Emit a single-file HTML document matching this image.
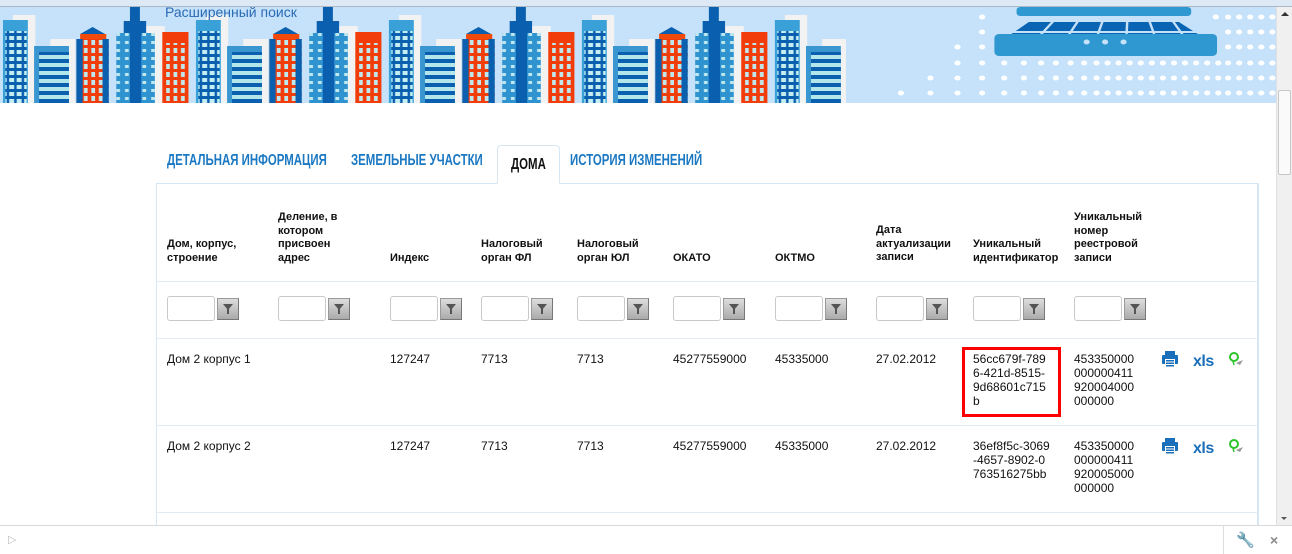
<!DOCTYPE html>
<html><head><meta charset="utf-8"><style>
*{margin:0;padding:0;box-sizing:border-box}
body{width:1292px;height:554px;overflow:hidden;background:#fff;font-family:"Liberation Sans",sans-serif;position:relative}
.a{position:absolute}
.top{left:0;top:0;width:1292px;height:7px;background:#dde9f5;border-bottom:1px solid #aab8c8}
.banner{left:0;top:7px;width:1276px;height:96px;background:#c5e2fa;overflow:hidden}
.sb{left:1276px;top:7px;width:16px;height:518px;background:#f0f0f0;border-left:1px solid #e0e0e0}
.thumb{left:1278px;top:90px;width:13px;height:85px;background:#fafafa;border:1px solid #c8c8c8;border-radius:2px}
.bot{left:0;top:525px;width:1292px;height:29px;background:#fff;border-top:1px solid #d8d8d8}
.tab{top:145px;height:38px;font-weight:bold;font-size:16px;color:#1b78c2;line-height:32px;white-space:nowrap}
.tab span{display:inline-block;transform:scaleX(0.715);transform-origin:left center}
.tab.act{border:1px solid #d6e6f2;border-bottom:1px solid #fff;background:#fff;color:#111;border-radius:4px 4px 0 0;height:39px;line-height:38px;padding-left:13px}
.box{left:156px;top:183px;width:1103px;height:360px;border:1px solid #d6e6f2;border-right:2px solid #d6e6f2}
.h{font-size:11px;font-weight:bold;color:#111;line-height:13.5px}
.c{font-size:12px;color:#111;line-height:14px}
.sep{left:157px;width:1101px;height:1px;background:#e3ecf4}
.inp{top:296px;width:48px;height:25px;border:1px solid #c9c9c9;border-radius:3px;background:#fff}
.fb{top:298px;width:22px;height:22px;background:linear-gradient(#ddd,#aaa);border:1px solid #999;border-right-color:#777;border-bottom-color:#777}
.fb:after{content:"";position:absolute;left:5px;top:5px;border-left:5px solid transparent;border-right:5px solid transparent;border-top:6px solid #555}
.fb:before{content:"";position:absolute;left:9px;top:10px;width:2px;height:5px;background:#555}
</style></head><body>
<div class="a top"></div>
<div class="a banner">
<svg width="1276" height="96" viewBox="0 0 1276 96">
<defs>
<pattern id="w1" width="6" height="7" patternUnits="userSpaceOnUse"><rect width="6" height="7" fill="#0a5fae"/><rect x="1" y="1" width="4" height="4" fill="#c5eef2"/></pattern>
<pattern id="w2" width="6" height="8" patternUnits="userSpaceOnUse"><rect width="6" height="8" fill="#f23d0a"/><rect x="1" y="1" width="3" height="5" fill="#bfe8ee"/></pattern>
<pattern id="w3" width="7" height="8" patternUnits="userSpaceOnUse"><rect width="7" height="8" fill="#2f93d0"/><rect x="1" y="2" width="3" height="3" fill="#bfe8ee"/></pattern>
<pattern id="st" width="10" height="8" patternUnits="userSpaceOnUse"><rect width="10" height="8" fill="#0a5fae"/><rect y="0" width="10" height="4" fill="#b2e6ea"/></pattern>
<clipPath id="cl"><rect x="0" y="0" width="846" height="96"/></clipPath>
<g id="u">
<rect x="16" y="8" width="18" height="90" fill="#f2f2f2"/>
<rect x="46" y="32" width="20" height="70" fill="#f2f2f2"/>
<rect x="122" y="19" width="16" height="80" fill="#f2f2f2"/>
<rect x="8" y="13" width="20" height="90" fill="#3aa0d8"/><rect x="10" y="24" width="17" height="79" fill="url(#w1)"/>
<rect x="33" y="39" width="28" height="64" fill="#3a96d0"/><rect x="37" y="45" width="24" height="58" fill="url(#st)"/>
<polygon points="70,27 80,20 90,27" fill="#0a5fae"/><rect x="70" y="27" width="21" height="76" fill="#f24a0a"/><rect x="67" y="32" width="26" height="71" fill="url(#w2)"/><rect x="67" y="32" width="5" height="71" fill="#0a5fae"/><rect x="88" y="32" width="5" height="71" fill="#0a5fae"/>
<rect x="110" y="0" width="8" height="20" fill="#0a5fae"/><rect x="105" y="14" width="18" height="89" fill="#0a5fae"/>
<rect x="99" y="26" width="11" height="77" fill="url(#w3)"/><rect x="119" y="26" width="11" height="77" fill="url(#w3)"/>
<rect x="136" y="25" width="21" height="78" fill="#f23d0a"/><rect x="139" y="36" width="16" height="67" fill="url(#w2)"/>
</g>
</defs>
<g clip-path="url(#cl)"><g transform="translate(-7,0) scale(1.245,1)">
<use href="#u" x="-155"/><use href="#u" x="0"/><use href="#u" x="155"/><use href="#u" x="310"/><use href="#u" x="465"/><use href="#u" x="620"/>
</g></g>
<g transform="translate(650,0) scale(1.23,1) translate(-650,0)">
<g fill="#fff"><circle cx="854" cy="86" r="2.5"/><circle cx="878" cy="86" r="2.5"/><circle cx="878" cy="71" r="2.5"/>
<circle cx="900" cy="40" r="2.5"/><circle cx="900" cy="56" r="2.5"/><circle cx="900" cy="71" r="2.5"/><circle cx="900" cy="86" r="2.5"/>
<circle cx="920" cy="10" r="2.5"/><circle cx="920" cy="25" r="2.5"/><circle cx="920" cy="40" r="2.5"/><circle cx="920" cy="56" r="2.5"/><circle cx="920" cy="71" r="2.5"/><circle cx="920" cy="86" r="2.5"/>
</g>
<rect x="948" y="0" width="142" height="9" rx="3" fill="#2f98d0"/>
<polygon points="958,15 1080,15 1108,37 932,37" fill="#0a64b4"/>
<g stroke="#c5e2fa" stroke-width="2"><line x1="935" y1="25" x2="1105" y2="25"/><line x1="978" y1="14" x2="960" y2="38"/><line x1="998" y1="14" x2="985" y2="38"/><line x1="1018" y1="14" x2="1011" y2="38"/><line x1="1038" y1="14" x2="1037" y2="38"/><line x1="1056" y1="14" x2="1063" y2="38"/><line x1="1075" y1="14" x2="1089" y2="38"/></g>
<rect x="930" y="27" width="181" height="22" rx="4" fill="#2f98d0"/>
<circle cx="1005" cy="35" r="2.5" fill="#c5e2fa"/><circle cx="1020" cy="35" r="2.5" fill="#c5e2fa"/><circle cx="1035" cy="35" r="2.5" fill="#c5e2fa"/>
<g fill="#fff">
<circle cx="1110" cy="10" r="2.5"/><circle cx="1120" cy="10" r="2.5"/><circle cx="1129" cy="10" r="2.5"/><circle cx="1138" cy="10" r="2.5"/><circle cx="1147" cy="10" r="2.5"/><circle cx="1156" cy="10" r="2.5"/>
<circle cx="1120" cy="25" r="2.5"/><circle cx="1129" cy="25" r="2.5"/><circle cx="1138" cy="25" r="2.5"/><circle cx="1147" cy="25" r="2.5"/><circle cx="1156" cy="25" r="2.5"/>
<circle cx="1120" cy="40" r="2.5"/><circle cx="1129" cy="40" r="2.5"/><circle cx="1138" cy="40" r="2.5"/><circle cx="1147" cy="40" r="2.5"/><circle cx="1156" cy="40" r="2.5"/>
</g>
<g fill="#fff">
<circle cx="938" cy="56" r="2.5"/><circle cx="954" cy="56" r="2.5"/><circle cx="968" cy="56" r="2.5"/><circle cx="980" cy="56" r="2.5"/><circle cx="992" cy="56" r="2.5"/><circle cx="1003" cy="56" r="2.5"/><circle cx="1013" cy="56" r="2.5"/><circle cx="1022" cy="56" r="2.5"/><circle cx="1031" cy="56" r="2.5"/><circle cx="1040" cy="56" r="2.5"/><circle cx="1049" cy="56" r="2.5"/><circle cx="1058" cy="56" r="2.5"/><circle cx="1067" cy="56" r="2.5"/><circle cx="1076" cy="56" r="2.5"/><circle cx="1085" cy="56" r="2.5"/><circle cx="1094" cy="56" r="2.5"/><circle cx="1103" cy="56" r="2.5"/><circle cx="1112" cy="56" r="2.5"/><circle cx="1120" cy="56" r="2.5"/><circle cx="1129" cy="56" r="2.5"/><circle cx="1138" cy="56" r="2.5"/><circle cx="1147" cy="56" r="2.5"/><circle cx="1156" cy="56" r="2.5"/>
<circle cx="938" cy="71" r="2.5"/><circle cx="954" cy="71" r="2.5"/><circle cx="968" cy="71" r="2.5"/><circle cx="980" cy="71" r="2.5"/><circle cx="992" cy="71" r="2.5"/><circle cx="1003" cy="71" r="2.5"/><circle cx="1013" cy="71" r="2.5"/><circle cx="1022" cy="71" r="2.5"/><circle cx="1031" cy="71" r="2.5"/><circle cx="1040" cy="71" r="2.5"/><circle cx="1049" cy="71" r="2.5"/><circle cx="1058" cy="71" r="2.5"/><circle cx="1067" cy="71" r="2.5"/><circle cx="1076" cy="71" r="2.5"/><circle cx="1085" cy="71" r="2.5"/><circle cx="1094" cy="71" r="2.5"/><circle cx="1103" cy="71" r="2.5"/><circle cx="1112" cy="71" r="2.5"/><circle cx="1120" cy="71" r="2.5"/><circle cx="1129" cy="71" r="2.5"/><circle cx="1138" cy="71" r="2.5"/><circle cx="1147" cy="71" r="2.5"/><circle cx="1156" cy="71" r="2.5"/>
<circle cx="938" cy="86" r="2.5"/><circle cx="954" cy="86" r="2.5"/><circle cx="968" cy="86" r="2.5"/><circle cx="980" cy="86" r="2.5"/><circle cx="992" cy="86" r="2.5"/><circle cx="1003" cy="86" r="2.5"/><circle cx="1013" cy="86" r="2.5"/><circle cx="1022" cy="86" r="2.5"/><circle cx="1031" cy="86" r="2.5"/><circle cx="1040" cy="86" r="2.5"/><circle cx="1049" cy="86" r="2.5"/><circle cx="1058" cy="86" r="2.5"/><circle cx="1067" cy="86" r="2.5"/><circle cx="1076" cy="86" r="2.5"/><circle cx="1085" cy="86" r="2.5"/><circle cx="1094" cy="86" r="2.5"/><circle cx="1103" cy="86" r="2.5"/><circle cx="1112" cy="86" r="2.5"/><circle cx="1120" cy="86" r="2.5"/><circle cx="1129" cy="86" r="2.5"/><circle cx="1138" cy="86" r="2.5"/><circle cx="1147" cy="86" r="2.5"/><circle cx="1156" cy="86" r="2.5"/>
</g>
</g>
</svg>
<div class="a" style="left:163px;top:-3px;font-size:14px;color:#2a6bb5;padding:0 2px;z-index:2">Расширенный поиск</div>
</div>
<div class="a sb"></div>
<div class="a" style="left:1281px;top:12px;border-left:4px solid transparent;border-right:4px solid transparent;border-bottom:4px solid #333"></div>
<div class="a thumb"></div>
<div class="a" style="left:1281px;top:517px;border-left:3px solid transparent;border-right:3px solid transparent;border-top:3px solid #555"></div>

<div class="a box"></div>
<div class="a tab" style="left:167px"><span>ДЕТАЛЬНАЯ ИНФОРМАЦИЯ</span></div>
<div class="a tab" style="left:351px"><span>ЗЕМЕЛЬНЫЕ УЧАСТКИ</span></div>
<div class="a tab act" style="left:497px;width:63px"><span>ДОМА</span></div>
<div class="a tab" style="left:570px"><span>ИСТОРИЯ ИЗМЕНЕНИЙ</span></div>

<div class="a h" style="left:167px;top:238px">Дом, корпус,<br>строение</div>
<div class="a h" style="left:278px;top:211px">Деление, в<br>котором<br>присвоен<br>адрес</div>
<div class="a h" style="left:390px;top:252px">Индекс</div>
<div class="a h" style="left:481px;top:238px">Налоговый<br>орган ФЛ</div>
<div class="a h" style="left:577px;top:238px">Налоговый<br>орган ЮЛ</div>
<div class="a h" style="left:673px;top:252px">ОКАТО</div>
<div class="a h" style="left:775px;top:252px">ОКТМО</div>
<div class="a h" style="left:876px;top:224px">Дата<br>актуализации<br>записи</div>
<div class="a h" style="left:973px;top:238px">Уникальный<br>идентификатор</div>
<div class="a h" style="left:1074px;top:211px">Уникальный<br>номер<br>реестровой<br>записи</div>
<div class="a sep" style="top:281px"></div>

<div class="a inp" style="left:167px"></div><div class="a fb" style="left:217px"></div>
<div class="a inp" style="left:278px"></div><div class="a fb" style="left:328px"></div>
<div class="a inp" style="left:390px"></div><div class="a fb" style="left:440px"></div>
<div class="a inp" style="left:481px"></div><div class="a fb" style="left:531px"></div>
<div class="a inp" style="left:577px"></div><div class="a fb" style="left:627px"></div>
<div class="a inp" style="left:673px"></div><div class="a fb" style="left:723px"></div>
<div class="a inp" style="left:775px"></div><div class="a fb" style="left:825px"></div>
<div class="a inp" style="left:876px"></div><div class="a fb" style="left:926px"></div>
<div class="a inp" style="left:973px"></div><div class="a fb" style="left:1023px"></div>
<div class="a inp" style="left:1074px"></div><div class="a fb" style="left:1124px"></div>
<div class="a sep" style="top:338px"></div>

<div class="a c" style="left:167px;top:352px">Дом 2 корпус 1</div>
<div class="a c" style="left:390px;top:352px">127247</div>
<div class="a c" style="left:481px;top:352px">7713</div>
<div class="a c" style="left:577px;top:352px">7713</div>
<div class="a c" style="left:673px;top:352px">45277559000</div>
<div class="a c" style="left:775px;top:352px">45335000</div>
<div class="a c" style="left:876px;top:352px">27.02.2012</div>
<div class="a c" style="left:973px;top:352px">56cc679f-789<br>6-421d-8515-<br>9d68601c715<br>b</div>
<div class="a" style="left:962px;top:347px;width:99px;height:70px;border:3px solid #f00"></div>
<div class="a c" style="left:1074px;top:352px">453350000<br>000000411<br>920004000<br>000000</div>
<div class="a sep" style="top:425px"></div>

<div class="a c" style="left:167px;top:439px">Дом 2 корпус 2</div>
<div class="a c" style="left:390px;top:439px">127247</div>
<div class="a c" style="left:481px;top:439px">7713</div>
<div class="a c" style="left:577px;top:439px">7713</div>
<div class="a c" style="left:673px;top:439px">45277559000</div>
<div class="a c" style="left:775px;top:439px">45335000</div>
<div class="a c" style="left:876px;top:439px">27.02.2012</div>
<div class="a c" style="left:973px;top:439px">36ef8f5c-3069<br>-4657-8902-0<br>763516275bb</div>
<div class="a c" style="left:1074px;top:439px">453350000<br>000000411<br>920005000<br>000000</div>
<div class="a sep" style="top:512px"></div>

<svg class="a" style="left:1160px;top:350px" width="90" height="110">
<g id="ic">
<rect x="5" y="1" width="10" height="4" fill="#1a6fba"/><rect x="2" y="5" width="16" height="9" rx="1" fill="#1a6fba"/><rect x="5" y="9" width="10" height="8" fill="#fff"/><rect x="6" y="10" width="8" height="1.5" fill="#1a6fba"/><rect x="6" y="12.5" width="8" height="1.5" fill="#1a6fba"/><rect x="6" y="15" width="8" height="1.5" fill="#1a6fba"/>
<text x="33" y="16" font-family="Liberation Sans" font-weight="bold" font-size="16" fill="#1a6fba" letter-spacing="-0.5">xls</text>
<circle cx="74" cy="7" r="4" fill="none" stroke="#2bc42b" stroke-width="2"/><path d="M73 11 L74 15" stroke="#2bc42b" stroke-width="1.5"/><path d="M76 13 L83 10 L80 15 Z" fill="#999"/>
</g>
<use href="#ic" y="87"/>
</svg>

<div class="a bot"></div>
<div class="a" style="left:8px;top:533px;font-size:11px;color:#bbb">▷</div>
<div class="a" style="left:1223px;top:526px;width:1px;height:28px;background:#ddd"></div>
<div class="a" style="left:1236px;top:531px;font-size:15px;color:#444">🔧</div>
<div class="a" style="left:1270px;top:532px;font-size:14px;color:#888;font-weight:bold">×</div>
</body></html>
